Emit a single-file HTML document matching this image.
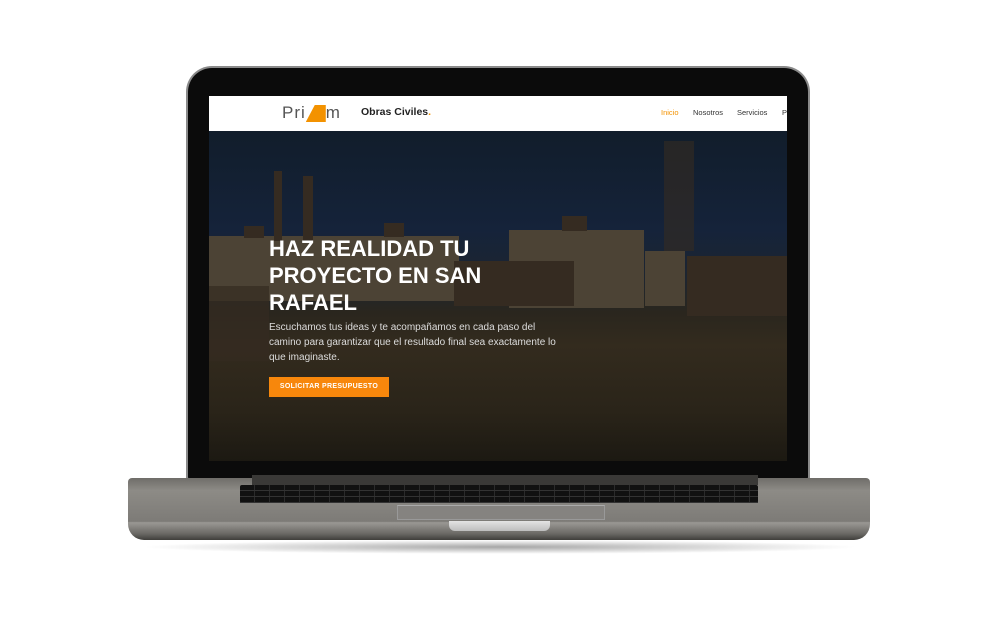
<!DOCTYPE html>
<html><head><meta charset="utf-8"><style>
*{margin:0;padding:0;box-sizing:border-box}
body{width:995px;height:618px;background:#fff;position:relative;overflow:hidden;font-family:"Liberation Sans",sans-serif}
.shadow{position:absolute;left:140px;top:540px;width:720px;height:14px;background:radial-gradient(ellipse at center,rgba(0,0,0,.35),rgba(0,0,0,0) 70%)}
.lid{position:absolute;left:186px;top:66px;width:624px;height:416px;border-radius:26px 26px 4px 4px;background:#8a8a8a;padding:2px}
.bezel{width:100%;height:100%;background:#0b0b0b;border-radius:24px 24px 3px 3px;position:relative}
.screen{position:absolute;left:21px;top:28px;width:578px;height:365px;overflow:hidden;background:#1a1a16}
.nav{position:absolute;left:0;top:0;width:100%;height:35px;background:#fff;z-index:2}
.hero{position:absolute;left:0;top:35px;width:100%;height:330px;
background:linear-gradient(180deg,#111d2b 0%,#15233a 30%,#1d2530 45%,#2a261e 55%,#332b1e 65%,#2a2419 85%,#1c1912 100%)}
.b{position:absolute;background:#4c4335}
.d{position:absolute;background:#352b21}
.logo{position:absolute;left:73px;top:7px;font-size:17px;color:#555;letter-spacing:1px}
.logo b{display:inline-block;width:20px;height:17px;background:#f39200;color:transparent;vertical-align:-2px;clip-path:polygon(45% 0,100% 0,100% 100%,0 100%)}
.oc{position:absolute;left:152px;top:10px;font-size:10.5px;font-weight:bold;color:#222}
.menu{position:absolute;top:12px;font-size:7.5px;color:#333}
h1{position:absolute;left:60px;top:104px;color:#fff;font-size:22px;line-height:27px;font-weight:bold;width:240px;z-index:1}
p{position:absolute;left:60px;top:189px;color:#ddd;font-size:10px;line-height:15px;width:295px;z-index:1}
.btn{position:absolute;left:60px;top:246px;width:120px;height:20px;background:#f7870c;color:#fff;font-size:7px;font-weight:bold;text-align:center;line-height:20px;letter-spacing:.3px}
.base{position:absolute;left:128px;top:478px;width:742px;height:62px;border-radius:4px 4px 16px 16px;background:linear-gradient(180deg,#6f6d69 0%,#8d8b86 20%,#7d7b77 70%,#9a9894 72%,#6a6864 90%,#3f3e3b 100%)}
.hinge{position:absolute;left:252px;top:475px;width:506px;height:10px;background:#3a3937}
.kb{position:absolute;left:240px;top:485px;width:518px;height:18px;background:repeating-linear-gradient(90deg,#111 0 14px,#2b2b2b 14px 15px);border-radius:2px}
.kb:after{content:"";position:absolute;inset:0;background:repeating-linear-gradient(180deg,transparent 0 5px,#333 5px 6px)}
.pad{position:absolute;left:397px;top:505px;width:208px;height:15px;border:1px solid #999;border-top-color:#aaa;background:#858380}
.notch{position:absolute;left:449px;top:521px;width:101px;height:10px;border-radius:0 0 6px 6px;background:linear-gradient(#e4e4e4,#bdbdbd)}
</style></head><body>
<div class="shadow"></div>
<div class="lid"><div class="bezel"><div class="screen">
<div class="nav">
<div class="logo">Pri<b>4</b>m</div>
<div class="oc">Obras Civiles<span style="color:#f39200">.</span></div>
<div class="menu" style="left:452px;color:#f39200">Inicio</div>
<div class="menu" style="left:484px">Nosotros</div>
<div class="menu" style="left:528px">Servicios</div>
<div class="menu" style="left:573px">P</div>
</div>
<div class="hero">
<div class="b" style="left:0;top:105px;width:250px;height:65px"></div>
<div class="d" style="left:175px;top:92px;width:20px;height:14px"></div>
<div class="d" style="left:35px;top:95px;width:20px;height:12px"></div>
<div class="b" style="left:300px;top:99px;width:135px;height:78px"></div>
<div class="d" style="left:353px;top:85px;width:25px;height:15px"></div>
<div class="d" style="left:245px;top:130px;width:120px;height:45px"></div>
<div class="b" style="left:436px;top:120px;width:40px;height:55px"></div>
<div class="d" style="left:478px;top:125px;width:100px;height:60px"></div>
<div class="d" style="left:65px;top:40px;width:8px;height:70px"></div>
<div class="d" style="left:94px;top:45px;width:10px;height:65px"></div>
<div class="d" style="left:455px;top:10px;width:30px;height:110px;opacity:.6"></div>
<div class="d" style="left:0;top:155px;width:60px;height:75px;opacity:.7"></div>
<h1>HAZ REALIDAD TU PROYECTO EN SAN RAFAEL</h1>
<p>Escuchamos tus ideas y te acompañamos en cada paso del camino para garantizar que el resultado final sea exactamente lo que imaginaste.</p>
<div class="btn">SOLICITAR PRESUPUESTO</div>
</div>
</div></div></div>
<div class="base"></div>
<div class="hinge"></div>
<div class="kb"></div>
<div class="pad"></div>
<div class="notch"></div>
</body></html>
